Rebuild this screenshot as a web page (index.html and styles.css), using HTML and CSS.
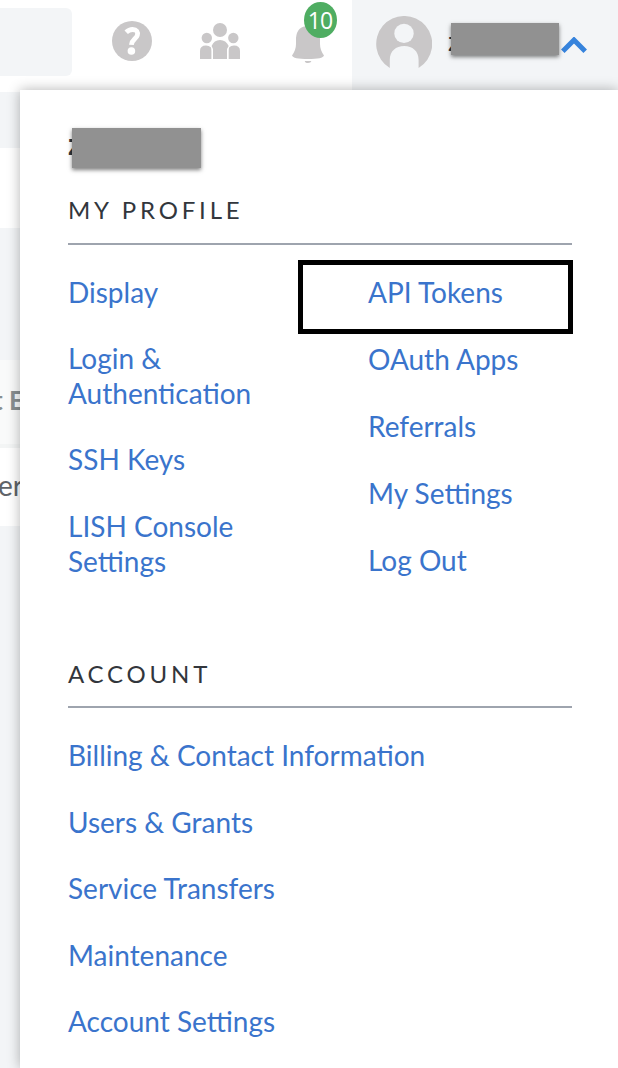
FILE: index.html
```html
<!DOCTYPE html>
<html lang="en">
<head>
<meta charset="utf-8">
<title>My Profile</title>
<link rel="stylesheet" href="styles.css">
</head>
<body>
<header class="topbar">
  <div class="search"></div>
  <svg class="icon help" viewBox="0 0 40 40"><circle cx="20" cy="20" r="20" fill="#c9c7c8"/><path d="M14.2 11.3Q17 8.5 20.6 8.5C24.7 8.5 26.2 11 25.3 14.3C24.4 17.6 19.7 18.8 19.4 23.8" fill="none" stroke="#fff" stroke-width="4.8"/><circle cx="19.4" cy="30" r="3.8" fill="#fff"/></svg>
  <svg class="icon people" viewBox="0 0 40 36"><g fill="#c9c7c8"><circle cx="20" cy="7" r="7"/><circle cx="6.8" cy="15" r="5.2"/><circle cx="33.3" cy="15" r="5.2"/><path d="M13 36V26L11.6 23Q14 17 20 17T28.7 23L27 26V36ZM0 36V28Q0 22.5 6 22.5Q9 22.5 10.8 24.3Q11.4 25.3 11.4 28V36ZM40 36V28Q40 22.5 34 22.5Q31 22.5 29.3 24.3Q28.7 25.3 28.7 28V36Z"/></g></svg>
  <div class="bell">
    <svg class="bell-icon" viewBox="0 0 32 38"><path d="M0 30.5Q4 25 4 19V13Q5 1 16 1T28 13V19Q28 25 32 30.5Q31 34 16 34T0 30.5ZM12.8 36H19.4Q19 38 16 38T12.8 36Z" fill="#c9c7c8"/></svg>
    <span class="badge">10</span>
  </div>
  <div class="user">
    <svg class="avatar" viewBox="0 0 56 52"><path d="M13.8 52A28 28 0 1 1 42.6 52V44C42.6 35 36.5 30 28.2 30S13.8 35 13.8 44Z" fill="#c9c7c8"/><circle cx="28" cy="17.4" r="9.7" fill="#f3f5f7"/></svg>
    <span class="username">z<span class="mask"></span></span>
    <svg class="chevron" viewBox="0 0 26 17"><path d="M1.8 14.2L13 3L24.2 14.2" fill="none" stroke="#3683dc" stroke-width="5"/></svg>
  </div>
</header>
<main class="page">
  <div class="panel"></div>
  <div class="table-head"><span>t E</span></div>
  <div class="table-row"><span>er</span></div>
</main>
<nav class="menu">
  <div class="account-name"><span class="name">z</span><span class="mask"></span></div>
  <h2 class="heading">MY PROFILE</h2>
  <div class="columns">
    <div class="links left">
      <a>Display</a>
      <a>Login &amp;<br>Authentication</a>
      <a>SSH Keys</a>
      <a>LISH Console<br>Settings</a>
    </div>
    <div class="links right">
      <a class="marked">API Tokens</a>
      <a>OAuth Apps</a>
      <a>Referrals</a>
      <a>My Settings</a>
      <a>Log Out</a>
    </div>
  </div>
  <h2 class="heading account">ACCOUNT</h2>
  <div class="links">
    <a>Billing &amp; Contact Information</a>
    <a>Users &amp; Grants</a>
    <a>Service Transfers</a>
    <a>Maintenance</a>
    <a>Account Settings</a>
  </div>
</nav>
</body>
</html>
```
FILE: styles.css
```css
*, *::before, *::after { box-sizing: border-box; }
body {
  margin: 0;
  width: 618px;
  height: 1068px;
  position: relative;
  overflow: hidden;
  background: #f3f5f7;
  color: #32363c;
  font-family: Lato, "Open Sans", sans-serif;
}
svg { display: block; flex: none; }
.topbar { display: flex; height: 92px; background: #fff; }
.search { width: 72px; height: 68px; margin-top: 8px; border-radius: 0 6px 6px 0; background: #f3f5f7; }
.help { width: 40px; height: 40px; margin: 21px 0 0 40px; }
.people { width: 40px; height: 36px; margin: 23px 0 0 48px; }
.bell { position: relative; width: 32px; margin: 25px 0 0 52px; }
.bell-icon { width: 32px; height: 38px; }
.badge {
  position: absolute;
  left: 12px;
  top: -23px;
  width: 33px;
  height: 36px;
  border-radius: 50%;
  background: #4fad62;
  color: #fff;
  font: 23px/37px "Open Sans", sans-serif;
  letter-spacing: -1px;
  text-indent: -1px;
  text-align: center;
}
.user { display: flex; width: 266px; margin-left: 28px; padding-left: 24px; background: #f3f5f7; }
.avatar { width: 56px; height: 52px; margin-top: 16px; }
.username { position: relative; width: 113px; margin: 23px 0 0 16px; font-size: 27px; line-height: 36px; }
.mask { position: absolute; background: #919191; box-shadow: 0 2px 4px rgba(0,0,0,.5); }
.username .mask { left: 3px; top: 0; width: 108px; height: 32px; }
.chevron { width: 26px; height: 17px; margin: 37px 0 0 0; }
.page { padding-top: 56px; }
.panel { height: 80px; background: #fff; }
.table-head {
  height: 88px;
  margin-top: 132px;
  padding-top: 24px;
  background: #f9fafa;
  border-bottom: 4px solid #f3f5f5;
  color: #888f91;
  font-size: 26px;
  font-weight: 700;
  line-height: 32px;
}
.table-head span { margin-left: -7px; }
.table-row { height: 78px; padding-top: 20px; background: #fff; color: #606469; font-size: 28px; line-height: 34px; }
.table-row span { margin-left: -2px; }
.menu {
  position: absolute;
  left: 20px;
  top: 90px;
  width: 598px;
  height: 978px;
  padding: 38px 0 0 48px;
  background: #fff;
  box-shadow: 0 0 12px rgba(0,0,0,.3);
}
.account-name { position: relative; height: 40px; font-size: 30px; font-weight: 700; line-height: 30px; }
.name { display: block; }
.account-name .mask { left: 4px; top: 0; width: 129px; height: 40px; }
.heading {
  width: 504px;
  height: 77px;
  margin: 0;
  padding-top: 27px;
  border-bottom: 2px solid #9ea4ae;
  font-size: 24px;
  font-weight: 400;
  line-height: 30px;
  letter-spacing: 3.8px;
}
.account { padding-top: 28px; }
.columns { display: grid; grid-template-columns: 300px 204px; height: 386px; }
.links { display: flex; flex-direction: column; gap: 31.5px; padding-top: 30px; color: #3a74cc; font-size: 28px; line-height: 35px; }
.left { gap: 31.2px; }
.right { gap: 32px; }
.marked { position: relative; }
.marked::after {
  content: "";
  position: absolute;
  left: -70.5px;
  top: -15.5px;
  width: 275px;
  height: 74px;
  border: 5px solid #000;
}
```
